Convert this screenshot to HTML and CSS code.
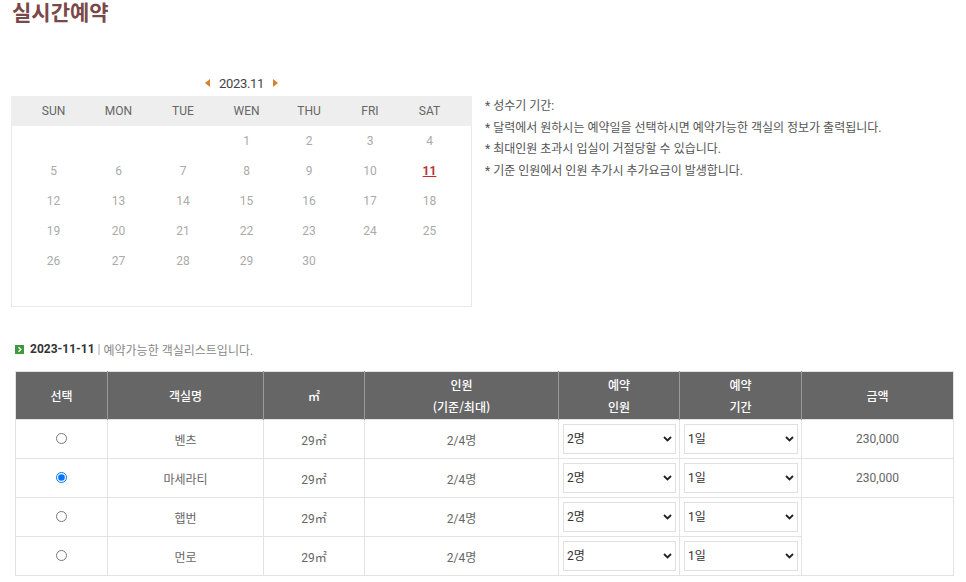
FILE: index.html
```html
<!DOCTYPE html>
<html lang="ko">
<head>
<meta charset="utf-8">
<link rel="stylesheet" href="styles.css">
</head>
<body>
<h1 class="title">실시간예약</h1>
<div class="top">
  <div class="cal-wrap">
    <div class="month-nav">
      <span class="arrow arrow-left"></span>
      <span class="month">2023.11</span>
      <span class="arrow arrow-right"></span>
    </div>
    <div class="cal">
      <div class="cal-head">
        <span>SUN</span><span>MON</span><span>TUE</span><span>WEN</span><span>THU</span><span>FRI</span><span>SAT</span>
      </div>
      <div class="cal-body">
        <span></span><span></span><span></span><span>1</span><span>2</span><span>3</span><span>4</span>
        <span>5</span><span>6</span><span>7</span><span>8</span><span>9</span><span>10</span><span class="today">11</span>
        <span>12</span><span>13</span><span>14</span><span>15</span><span>16</span><span>17</span><span>18</span>
        <span>19</span><span>20</span><span>21</span><span>22</span><span>23</span><span>24</span><span>25</span>
        <span>26</span><span>27</span><span>28</span><span>29</span><span>30</span><span></span><span></span>
        <span></span><span></span><span></span><span></span><span></span><span></span><span></span>
      </div>
    </div>
  </div>
  <ul class="notes">
    <li>* 성수기 기간:</li>
    <li>* 달력에서 원하시는 예약일을 선택하시면 예약가능한 객실의 정보가 출력됩니다.</li>
    <li>* 최대인원 초과시 입실이 거절당할 수 있습니다.</li>
    <li>* 기준 인원에서 인원 추가시 추가요금이 발생합니다.</li>
  </ul>
</div>
<div class="list-title">
  <span class="gicon"><svg width="9" height="9" viewBox="0 0 9 9"><rect width="9" height="9" fill="#3c9a3c"/><path d="M3.5 2.3 L5.8 4.5 L3.5 6.7" fill="none" stroke="#fff" stroke-width="1.4"/></svg></span>
  <b class="date">2023-11-11</b><span class="bar">|</span><span class="desc">예약가능한 객실리스트입니다.</span>
</div>
<table class="rooms">
  <colgroup>
    <col class="c1"><col class="c2"><col class="c3"><col class="c4"><col class="c5"><col class="c6"><col class="c7">
  </colgroup>
  <thead>
    <tr>
      <th>선택</th><th>객실명</th><th>㎡</th><th>인원<br>(기준/최대)</th><th>예약<br>인원</th><th>예약<br>기간</th><th>금액</th>
    </tr>
  </thead>
  <tbody>
    <tr>
      <td><input type="radio" name="room" class="radio"></td><td>벤츠</td><td>29㎡</td><td>2/4명</td>
      <td class="sel-cell"><div class="sel"><select><option>2명</option></select><svg class="chev" width="9" height="6" viewBox="0 0 9 6"><path d="M1 1 L4.5 4.5 L8 1" fill="none" stroke="#222" stroke-width="1.8"/></svg></div></td>
      <td class="sel-cell"><div class="sel"><select><option>1일</option></select><svg class="chev" width="9" height="6" viewBox="0 0 9 6"><path d="M1 1 L4.5 4.5 L8 1" fill="none" stroke="#222" stroke-width="1.8"/></svg></div></td>
      <td>230,000</td>
    </tr>
    <tr>
      <td><input type="radio" name="room" class="radio" checked></td><td>마세라티</td><td>29㎡</td><td>2/4명</td>
      <td class="sel-cell"><div class="sel"><select><option>2명</option></select><svg class="chev" width="9" height="6" viewBox="0 0 9 6"><path d="M1 1 L4.5 4.5 L8 1" fill="none" stroke="#222" stroke-width="1.8"/></svg></div></td>
      <td class="sel-cell"><div class="sel"><select><option>1일</option></select><svg class="chev" width="9" height="6" viewBox="0 0 9 6"><path d="M1 1 L4.5 4.5 L8 1" fill="none" stroke="#222" stroke-width="1.8"/></svg></div></td>
      <td>230,000</td>
    </tr>
    <tr>
      <td><input type="radio" name="room" class="radio"></td><td>햅번</td><td>29㎡</td><td>2/4명</td>
      <td class="sel-cell"><div class="sel"><select><option>2명</option></select><svg class="chev" width="9" height="6" viewBox="0 0 9 6"><path d="M1 1 L4.5 4.5 L8 1" fill="none" stroke="#222" stroke-width="1.8"/></svg></div></td>
      <td class="sel-cell"><div class="sel"><select><option>1일</option></select><svg class="chev" width="9" height="6" viewBox="0 0 9 6"><path d="M1 1 L4.5 4.5 L8 1" fill="none" stroke="#222" stroke-width="1.8"/></svg></div></td>
      <td rowspan="2"></td>
    </tr>
    <tr>
      <td><input type="radio" name="room" class="radio"></td><td>먼로</td><td>29㎡</td><td>2/4명</td>
      <td class="sel-cell"><div class="sel"><select><option>2명</option></select><svg class="chev" width="9" height="6" viewBox="0 0 9 6"><path d="M1 1 L4.5 4.5 L8 1" fill="none" stroke="#222" stroke-width="1.8"/></svg></div></td>
      <td class="sel-cell"><div class="sel"><select><option>1일</option></select><svg class="chev" width="9" height="6" viewBox="0 0 9 6"><path d="M1 1 L4.5 4.5 L8 1" fill="none" stroke="#222" stroke-width="1.8"/></svg></div></td>
    </tr>
  </tbody>
</table>
</body>
</html>
```
FILE: styles.css
```css
* { box-sizing: border-box; }
html, body { margin: 0; padding: 0; background: #fff; }
body {
  font-family: Roboto, "Noto Sans CJK KR", sans-serif;
  font-size: 12px;
  color: #555;
}
.title {
  margin: 0 0 0 12px;
  font-size: 21px;
  line-height: 22px;
  font-weight: bold;
  color: #7a4848;
  font-family: "Noto Sans CJK KR", sans-serif;
}
.top {
  display: flex;
  margin-top: 48px;
}
.cal-wrap {
  margin-left: 11px;
  width: 461px;
}
.month-nav {
  height: 26px;
  display: flex;
  align-items: center;
  justify-content: center;
  gap: 9px;
}
.month {
  font-size: 13px;
  color: #444;
  letter-spacing: -0.3px;
}
.arrow {
  width: 0;
  height: 0;
  border-top: 4px solid transparent;
  border-bottom: 4px solid transparent;
}
.arrow-left { border-right: 5px solid #d9822b; }
.arrow-right { border-left: 5px solid #d9822b; }
.cal {
  border: 1px solid #e8e8e8;
  border-top: none;
  height: 211px;
}
.cal-head {
  background: #eeeeee;
  height: 30px;
  display: grid;
  grid-template-columns: 65px 65px 64px 63px 62px 60px 59px;
  align-items: center;
  text-align: center;
  color: #666;
  margin: 0 -1px;
  padding-left: 10px;
}
.cal-body {
  display: grid;
  grid-template-columns: 65px 65px 64px 63px 62px 60px 59px;
  grid-auto-rows: 30px;
  padding-left: 9px;
  align-items: center;
  text-align: center;
  color: #aaa;
}
.today {
  color: #b83232;
  font-weight: bold;
  text-decoration: underline;
}
.notes {
  list-style: none;
  margin: 26px 0 0 13px;
  padding: 0;
  color: #555;
  line-height: 21.5px;
}
.list-title {
  margin: 32px 0 0 15px;
  display: flex;
  align-items: center;
  height: 20px;
  color: #888;
}
.gicon { display: flex; margin-right: 6px; }
.date { color: #333; font-weight: bold; }
.bar { color: #aaa; margin: 0 3px; }
.rooms {
  margin: 12px 0 0 15px;
  width: 938px;
  border-collapse: collapse;
  table-layout: fixed;
  border: 1px solid #e3e3e3;
}
.c1 { width: 92px; }
.c2 { width: 156px; }
.c3 { width: 101px; }
.c4 { width: 194px; }
.c5 { width: 121px; }
.c6 { width: 122px; }
.c7 { width: 152px; }
.rooms th {
  background: #666666;
  color: #fff;
  font-weight: 500;
  font-size: 12px;
  line-height: 22px;
  height: 48px;
  padding: 0;
  border-left: 1px solid #9a9a9a;
  font-family: "Noto Sans CJK KR", sans-serif;
}
.rooms th:first-child { border-left: none; }
.rooms td {
  height: 39px;
  padding: 0;
  text-align: center;
  border: 1px solid #e3e3e3;
  color: #666;
}
.radio {
  width: 11px;
  height: 11px;
  margin: 0;
  vertical-align: middle;
  position: relative;
  top: -1px;
}
.rooms td.sel-cell { padding: 0 3px 0 4px; }
.sel {
  position: relative;
  height: 30px;
}
.sel select {
  appearance: none;
  -webkit-appearance: none;
  width: 100%;
  height: 30px;
  border: 1px solid #e0e0e0;
  background: #fff;
  font-family: Roboto, "Noto Sans CJK KR", sans-serif;
  font-size: 12px;
  color: #333;
  padding: 0 0 0 3px;
  border-radius: 0;
  outline: none;
}
.chev {
  position: absolute;
  right: 4px;
  top: 12px;
  pointer-events: none;
}
```
